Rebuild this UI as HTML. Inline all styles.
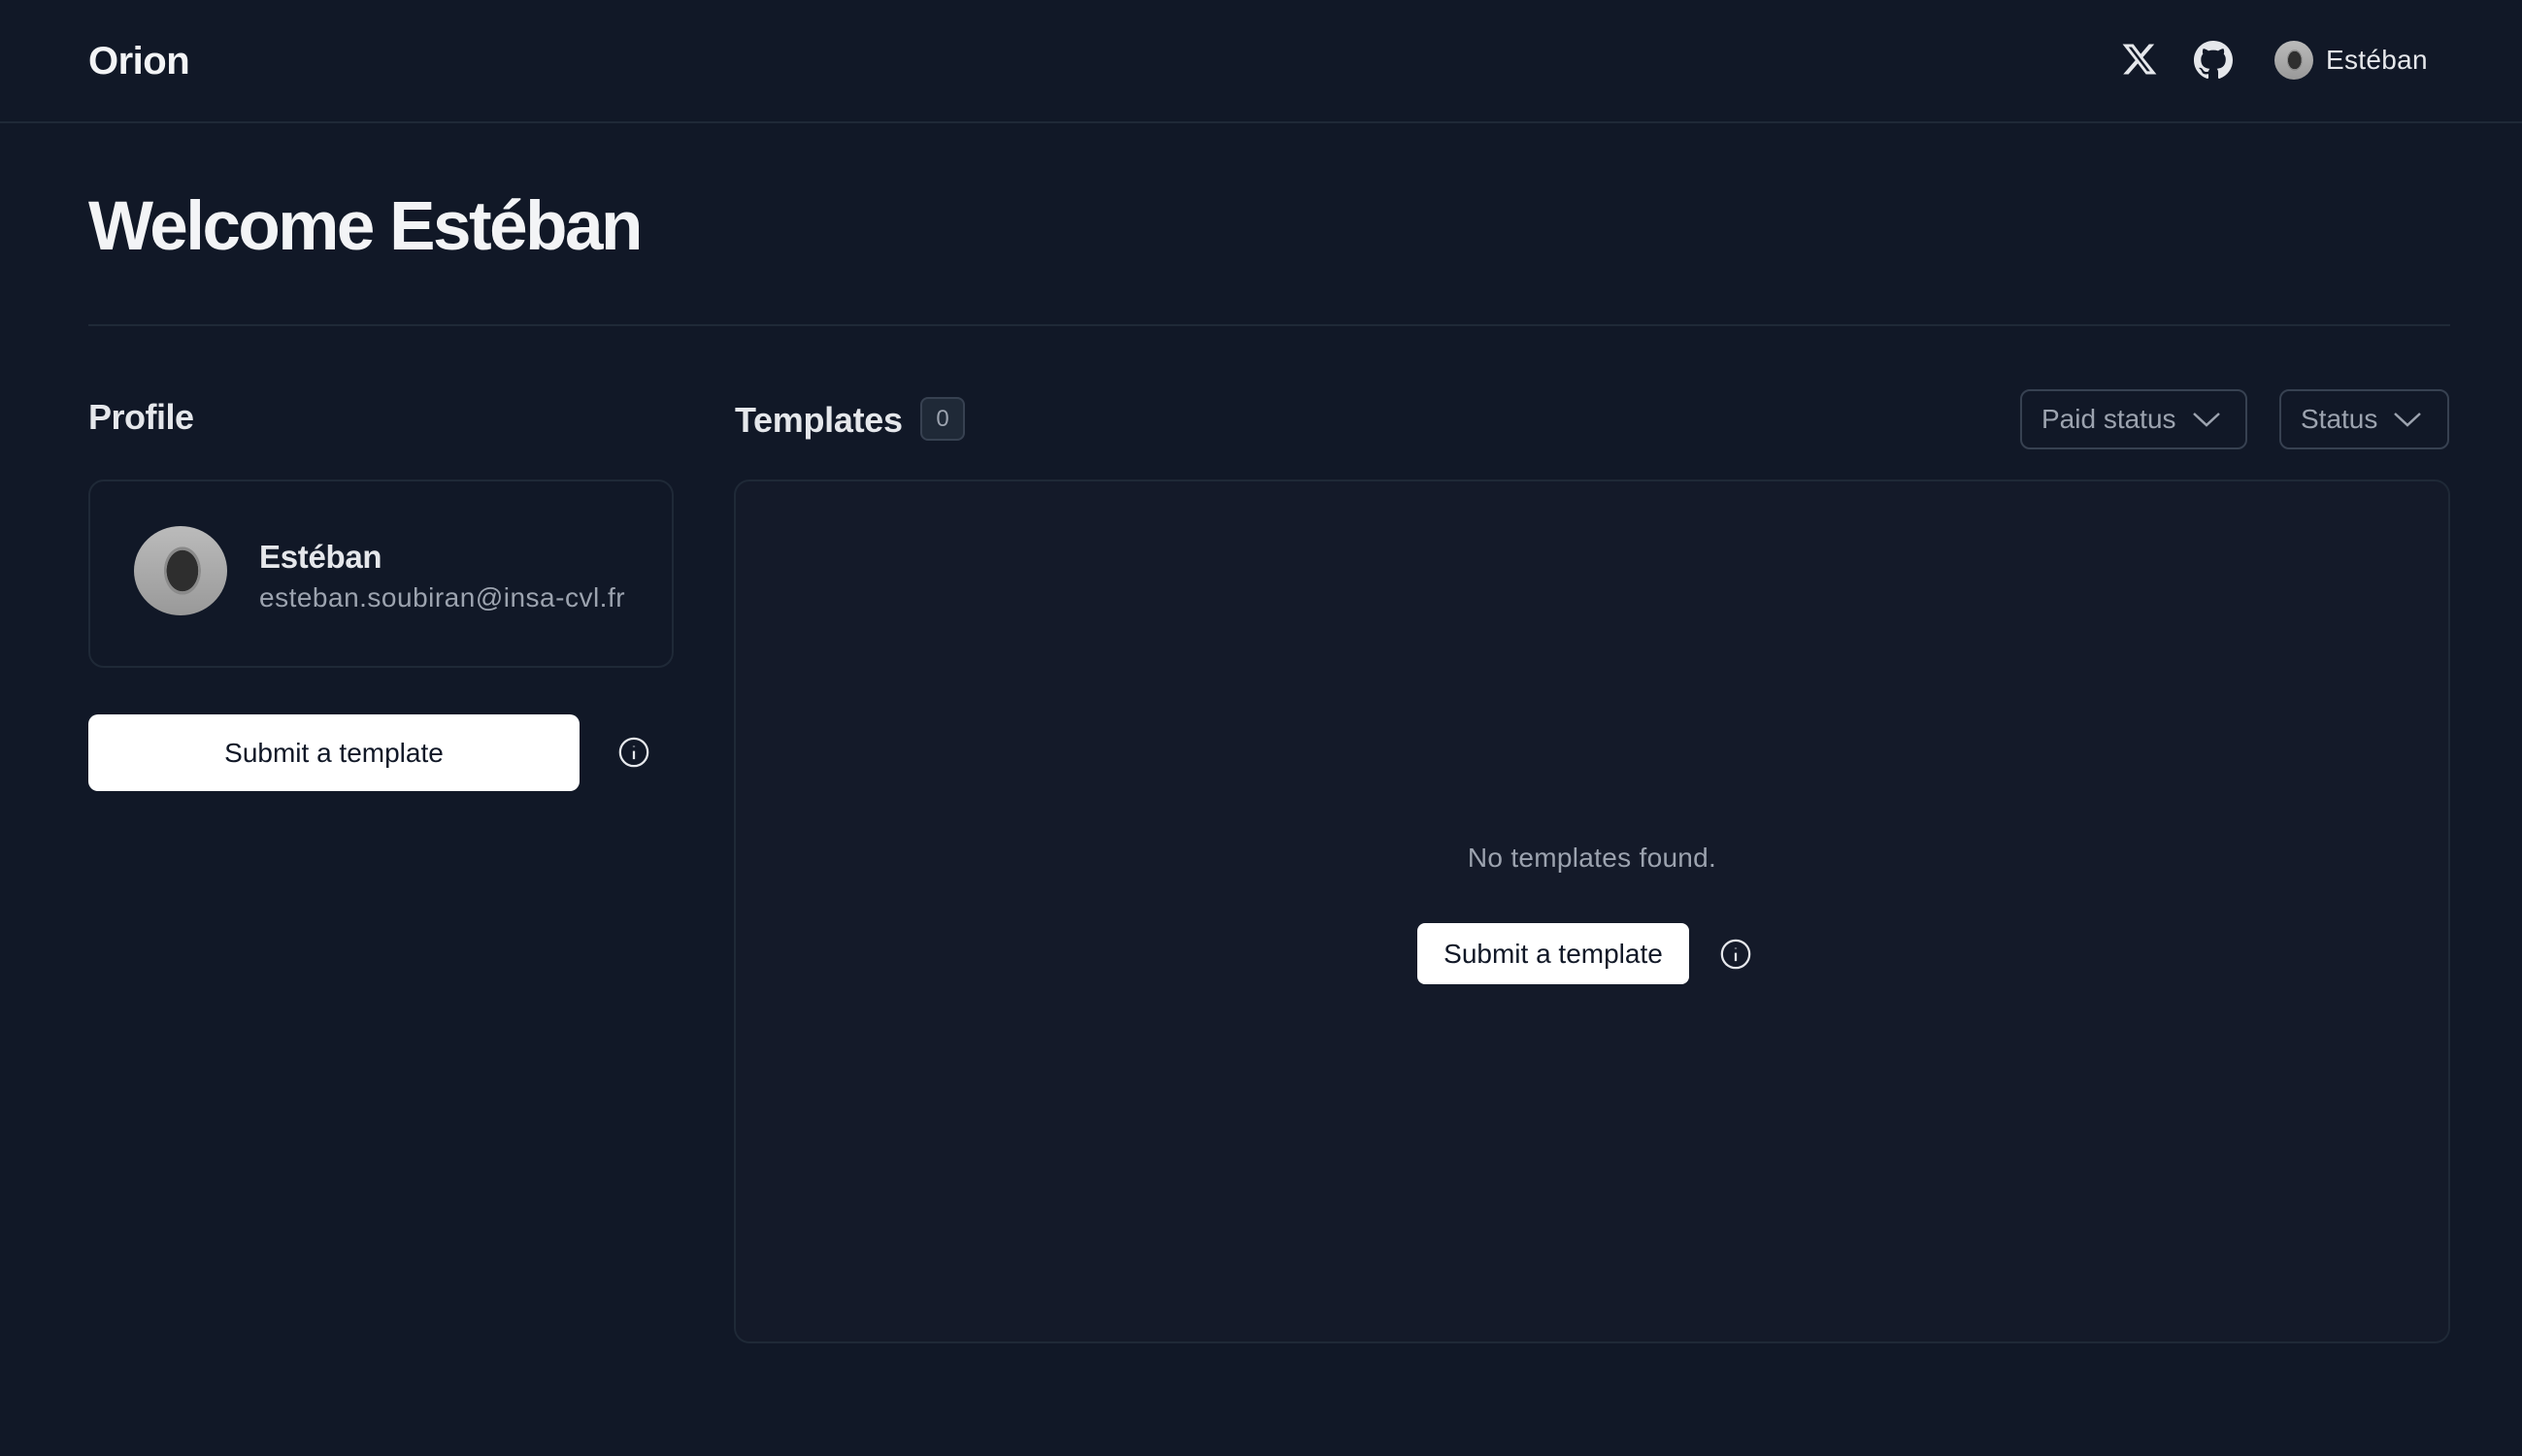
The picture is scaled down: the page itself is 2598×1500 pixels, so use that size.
<!DOCTYPE html>
<html><head><meta charset="utf-8"><style>
*{box-sizing:border-box;margin:0;padding:0}
body{width:2598px;height:1500px;background:#111827;font-family:"Liberation Sans",sans-serif;color:#f3f4f6;position:relative;overflow:hidden}
.a{position:absolute}
.avatar{border-radius:50%;background:radial-gradient(ellipse 28% 38% at 52% 50%,#2e2e2e 0 60%,#8a8a8a 61% 70%,transparent 71%),linear-gradient(#bbb,#999)}
.btn{background:#fff;color:#111827;border-radius:10px;display:flex;align-items:center;justify-content:center}
.sel{border:2px solid #374151;border-radius:10px;color:#9ca3af;font-size:28px;display:flex;align-items:center;padding-left:20px}
</style></head><body>
<div class="a" style="left:0;top:0;width:2598px;height:127px;border-bottom:2px solid #1f2937"></div>
<div class="a" style="left:91px;top:41px;font-size:40px;font-weight:bold;letter-spacing:-0.5px">Orion</div>
<svg class="a" style="left:2184px;top:42px" width="40" height="38" viewBox="0 0 24 24" fill="#e5e7eb"><path d="M18.2 2.2h3.4l-7.4 8.5L23 21.8h-6.8l-5.3-7-6.1 7H1.4l7.9-9.1L1 2.2h7l4.8 6.4zm-1.2 17.6h1.9L6.9 4.1H4.9z"/></svg>
<svg class="a" style="left:2260px;top:42px" width="40" height="40" viewBox="0 0 16 16" fill="#e5e7eb"><path d="M8 0C3.58 0 0 3.58 0 8c0 3.540 2.29 6.53 5.47 7.59.4.07.55-.17.55-.38 0-.19-.01-.82-.01-1.490-2.010.37-2.530-.49-2.690-.94-.09-.23-.48-.94-.82-1.130-.28-.15-.68-.52-.01-.53.63-.01 1.080.58 1.230.82.72 1.210 1.870.87 2.330.66.07-.52.28-.87.51-1.070-1.780-.2-3.640-.89-3.640-3.950 0-.87.31-1.590.82-2.150-.08-.2-.36-1.020.08-2.120 0 0 .67-.21 2.200.82.64-.18 1.320-.27 2-.27.68 0 1.360.09 2 .27 1.530-1.040 2.200-.82 2.200-.82.44 1.100.16 1.920.08 2.120.51.56.82 1.270.82 2.150 0 3.070-1.870 3.750-3.650 3.950.29.25.54.73.54 1.480 0 1.070-.01 1.930-.01 2.200 0 .21.15.46.55.38A8.013 8.013 0 0016 8c0-4.420-3.580-8-8-8z"/></svg>
<div class="a avatar" style="left:2343px;top:42px;width:40px;height:40px"></div>
<div class="a" style="left:2396px;top:46px;font-size:28px;color:#e5e7eb;letter-spacing:0.3px">Estéban</div>
<div class="a" style="left:91px;top:193px;font-size:71px;font-weight:bold;letter-spacing:-2.5px">Welcome Estéban</div>
<div class="a" style="left:91px;top:334px;width:2433px;height:2px;background:#1f2937"></div>
<div class="a" style="left:91px;top:409px;font-size:36px;font-weight:bold;color:#e5e7eb;letter-spacing:-0.5px">Profile</div>
<div class="a" style="left:91px;top:494px;width:603px;height:194px;border:2px solid #1f2937;border-radius:16px"></div>
<div class="a avatar" style="left:138px;top:542px;width:96px;height:92px"></div>
<div class="a" style="left:267px;top:555px;font-size:33px;font-weight:bold;color:#e5e7eb;letter-spacing:-0.3px">Estéban</div>
<div class="a" style="left:267px;top:600px;font-size:28px;color:#9ca3af;letter-spacing:0.5px">esteban.soubiran@insa-cvl.fr</div>
<div class="a btn" style="left:91px;top:736px;width:506px;height:79px;font-size:28px">Submit a template</div>
<svg class="a" style="left:636px;top:758px" width="34" height="34" viewBox="0 0 24 24" fill="none" stroke="#e5e7eb" stroke-width="1.6"><circle cx="12" cy="12" r="10"/><path d="M12 11v6M12 7.5v.5"/></svg>
<div class="a" style="left:757px;top:412px;font-size:36px;font-weight:bold;color:#e5e7eb;letter-spacing:-0.3px">Templates</div>
<div class="a" style="left:948px;top:409px;width:46px;height:45px;border:2px solid #374151;background:#1f2937;border-radius:8px;color:#9ca3af;font-size:24px;display:flex;align-items:center;justify-content:center">0</div>
<div class="a sel" style="left:2081px;top:401px;width:234px;height:62px">Paid status<svg style="margin-left:16px" width="30" height="18" viewBox="0 0 30 18" fill="none" stroke="#9ca3af" stroke-width="2.5"><path d="M2 3l13 12 13-12"/></svg></div>
<div class="a sel" style="left:2348px;top:401px;width:175px;height:62px">Status<svg style="margin-left:16px" width="30" height="18" viewBox="0 0 30 18" fill="none" stroke="#9ca3af" stroke-width="2.5"><path d="M2 3l13 12 13-12"/></svg></div>
<div class="a" style="left:756px;top:494px;width:1768px;height:890px;border:2px solid #1f2937;border-radius:16px;background:#141a29"></div>
<div class="a" style="left:756px;top:868px;width:1768px;text-align:center;font-size:28px;color:#9ca3af;letter-spacing:0.3px">No templates found.</div>
<div class="a btn" style="left:1460px;top:951px;width:280px;height:63px;font-size:28px;border-radius:8px">Submit a template</div>
<svg class="a" style="left:1771px;top:966px" width="34" height="34" viewBox="0 0 24 24" fill="none" stroke="#e5e7eb" stroke-width="1.6"><circle cx="12" cy="12" r="10"/><path d="M12 11v6M12 7.5v.5"/></svg>
</body></html>
